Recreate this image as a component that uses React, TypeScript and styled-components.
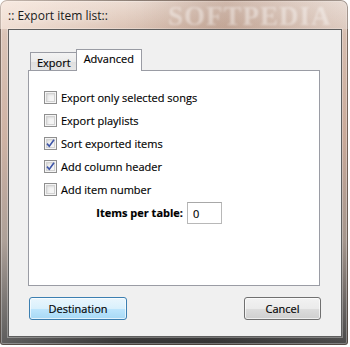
import React from "react";
import styled, { createGlobalStyle } from "styled-components";

const Global = createGlobalStyle`
  html, body { margin: 0; padding: 0; background: #ffffff; }
  body { width: 350px; height: 347px; overflow: hidden; font-family: "Open Sans", "Noto Sans", sans-serif; -webkit-text-stroke: 0.15px #000; }
`;

const Window = styled.div`
  position: relative;
  width: 348px;
  height: 345px;
  border-radius: 7px 7px 3px 3px;
  box-sizing: border-box;
  display: flex;
  flex-direction: column;
  overflow: hidden;
  background:
    linear-gradient(to right, rgba(255,255,255,0.2) 0%, rgba(255,255,255,0) 35%, rgba(0,0,0,0.05) 60%, rgba(255,255,255,0.1) 100%),
    linear-gradient(to bottom, #eadad0 0%, #d2b6a6 10%, #c3a08e 40%, #9a8a80 70%, #5a5552 88%, #353535 100%);
  box-shadow: inset 0 0 0 1px rgba(50, 35, 25, 0.6), inset 0 0 0 2px rgba(255,255,255,0.3);
`;

const TitleBar = styled.div`
  position: relative;
  height: 29px;
  flex: none;
  display: flex;
  align-items: center;
  padding: 0 0 0 8px;
  background: linear-gradient(to right, rgba(255,240,230,0.55) 0%, rgba(255,240,230,0.1) 40%, rgba(170,130,110,0.3) 65%, rgba(230,220,215,0.35) 100%);
`;

const Title = styled.span`
  font-family: "Open Sans", "Noto Sans", sans-serif;
  font-size: 12px;
  color: #1a1a1a;
  margin-top: 1px;
  -webkit-text-stroke: 0;
  text-shadow: 0 0 6px rgba(255,255,255,0.9);
`;

const Watermark = styled.span`
  position: absolute;
  left: 168px;
  top: 1px;
  font-family: "Liberation Serif", serif;
  font-weight: bold;
  font-size: 27px;
  letter-spacing: 1px;
  color: rgba(255, 255, 255, 0.4);
  -webkit-text-stroke: 0;
  filter: blur(1px);
`;

const Client = styled.div`
  flex: none;
  margin: 0 6px 0 8px;
  width: 334px;
  height: 308px;
  box-sizing: border-box;
  background: #f0f0f0;
  border: 1px solid #5e5e5e;
  box-shadow: 0 0 0 1px rgba(255,255,255,0.3);
  padding: 20px 22px 0 19px;
  display: flex;
  flex-direction: column;
`;

const TabStrip = styled.div`
  display: flex;
  align-items: flex-end;
  height: 21px;
  padding-left: 2px;
  margin-bottom: -1px;
`;

const Tab = styled.div<{ $active?: boolean }>`
  position: relative;
  z-index: ${(p) => (p.$active ? 1 : 0)};
  box-sizing: border-box;
  height: ${(p) => (p.$active ? 22 : 19)}px;
  padding: ${(p) => (p.$active ? "1px 7px 0" : "2px 5px 0 6px")};
  border: 1px solid #9a9ca4;
  border-bottom: ${(p) => (p.$active ? "none" : "1px solid #9a9ca4")};
  margin-left: ${(p) => (p.$active ? "-1px" : "0")};
  background: ${(p) => (p.$active ? "#ffffff" : "linear-gradient(to bottom, #f3f3f3 0%, #ebebeb 50%, #dedede 51%, #e6e6e6 100%)")};
  font-size: 11px;
  color: #000;
  line-height: 16px;
`;

const Panel = styled.div`
  box-sizing: border-box;
  width: 292px;
  height: 216px;
  background: #ffffff;
  border: 1px solid #9a9ca4;
  padding: 15px 0 0 15px;
  display: flex;
  flex-direction: column;
`;

const Row = styled.label`
  display: flex;
  align-items: center;
  height: 23px;
  gap: 4px;
  font-size: 11px;
  color: #000;
`;

const Box = styled.span`
  box-sizing: border-box;
  width: 13px;
  height: 13px;
  flex: none;
  border: 1px solid #8f8f8f;
  background: #f4f4f4;
  display: flex;
  align-items: center;
  justify-content: center;
  box-shadow: inset 0 0 0 1px #f4f4f4, inset 0 0 0 2px #d2d2d2, inset 2px 2px 3px #c4c4c4;
`;

const ItemsRow = styled.div`
  display: flex;
  align-items: center;
  height: 23px;
  gap: 4px;
`;

const ItemsLabel = styled.span`
  width: 139px;
  text-align: right;
  font-weight: bold;
  font-size: 11px;
  color: #000;
`;

const NumberInput = styled.div`
  box-sizing: border-box;
  width: 35px;
  height: 22px;
  border: 1px solid #b8b8b8;
  border-top-color: #a8a8a8;
  background: #fff;
  font-size: 11px;
  padding: 3px 0 0 5px;
  color: #000;
`;

const ButtonBar = styled.div`
  display: flex;
  justify-content: space-between;
  margin-top: 11px;
  padding-left: 1px;
  width: 292px;
`;

const Button = styled.div<{ $default?: boolean; $w: number }>`
  box-sizing: border-box;
  width: ${(p) => p.$w}px;
  height: 23px;
  border-radius: 3px;
  border: 1px solid ${(p) => (p.$default ? "#3c7fb1" : "#707070")};
  background: ${(p) =>
    p.$default
      ? "linear-gradient(to bottom, #eaf6fd 0%, #d9f0fc 50%, #bee6fd 51%, #a7d9f5 100%)"
      : "linear-gradient(to bottom, #f2f2f2 0%, #ebebeb 50%, #dddddd 51%, #cfcfcf 100%)"};
  box-shadow: inset 0 0 0 1px rgba(255,255,255,0.65);
  display: flex;
  align-items: center;
  justify-content: center;
  font-size: 11px;
  color: #000;
`;

const Check = () => (
  <svg width="9" height="9" viewBox="0 0 9 9">
    <path d="M1 4.6 L3.3 7.2 L8 0.8" fill="none" stroke="#3d55a8" strokeWidth="1.6" />
  </svg>
);

const items: { label: string; checked: boolean }[] = [
  { label: "Export only selected songs", checked: false },
  { label: "Export playlists", checked: false },
  { label: "Sort exported items", checked: true },
  { label: "Add column header", checked: true },
  { label: "Add item number", checked: false },
];

export default function App() {
  return (
    <>
      <Global />
      <Window>
        <TitleBar>
          <Title>:: Export item list::</Title>
          <Watermark>SOFTPEDIA</Watermark>
        </TitleBar>
        <Client>
          <TabStrip>
            <Tab>Export</Tab>
            <Tab $active>Advanced</Tab>
          </TabStrip>
          <Panel>
            {items.map((it) => (
              <Row key={it.label}>
                <Box>{it.checked && <Check />}</Box>
                {it.label}
              </Row>
            ))}
            <ItemsRow>
              <ItemsLabel>Items per table:</ItemsLabel>
              <NumberInput>0</NumberInput>
            </ItemsRow>
          </Panel>
          <ButtonBar>
            <Button $default $w={98}>Destination</Button>
            <Button $w={77}>Cancel</Button>
          </ButtonBar>
        </Client>
      </Window>
    </>
  );
}
